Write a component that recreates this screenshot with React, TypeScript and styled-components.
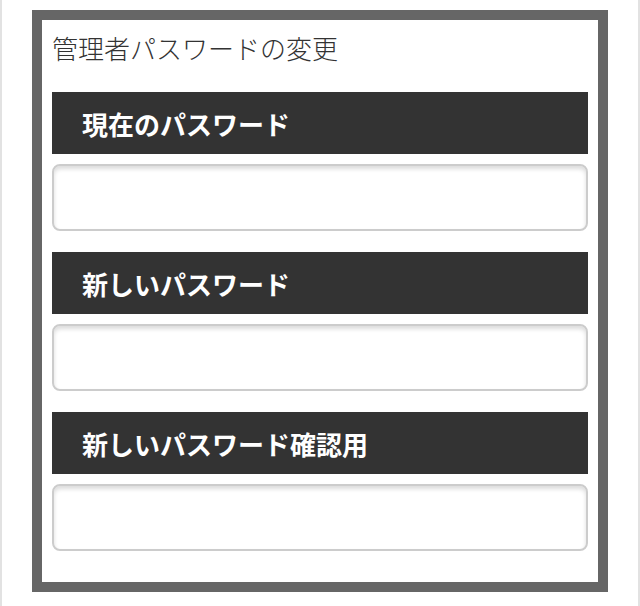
import { FC } from 'react';
import styled, { createGlobalStyle } from 'styled-components';

// - - - - - - STYLED-COMPONENTS

const GlobalStyle = createGlobalStyle`
    * {
        box-sizing: border-box;
    }

    body {
        margin: 0;
        background: #fff;
        font-family: 'Noto Sans CJK JP', 'Noto Sans', sans-serif;
        color: #333;
    }
`;

const Page = styled.div`
    width: 640px;
    min-height: 606px;
    border-left: 2px solid #e2e2e2;
    border-right: 2px solid #e2e2e2;
    padding: 10px 30px;
`;

const Frame = styled.form`
    border: 10px solid #666;
    background: #fff;
    padding: 10px;
`;

const Title = styled.h2`
    margin: 0 0 26px;
    font-size: 26px;
    line-height: 36px;
    font-weight: 300;
    color: #333;
`;

const Field = styled.div`
    margin-bottom: 21px;
`;

const Label = styled.label`
    display: flex;
    align-items: center;
    height: 62px;
    padding: 0 30px;
    background: #333;
    color: #fff;
    font-size: 26px;
    font-weight: 700;
`;

const Input = styled.input`
    display: block;
    width: 100%;
    height: 67px;
    margin-top: 10px;
    border: 2px solid #ccc;
    border-radius: 8px;
    background: #fff;
    box-shadow: inset 0 3px 4px rgba(0, 0, 0, 0.14);
    font-size: 22px;
    padding: 0 12px;
    outline: none;
`;

// - - - - - - - - - - - - - - -

const fields = [
    { id: 'current', label: '現在のパスワード' },
    { id: 'new', label: '新しいパスワード' },
    { id: 'confirm', label: '新しいパスワード確認用' },
];

const App: FC = () => {
    return (
        <>
            <GlobalStyle />
            <Page>
                <Frame onSubmit={(e) => e.preventDefault()}>
                    <Title>管理者パスワードの変更</Title>
                    {fields.map((f) => (
                        <Field key={f.id}>
                            <Label htmlFor={f.id}>{f.label}</Label>
                            <Input id={f.id} type="password" />
                        </Field>
                    ))}
                </Frame>
            </Page>
        </>
    );
};

export default App;
